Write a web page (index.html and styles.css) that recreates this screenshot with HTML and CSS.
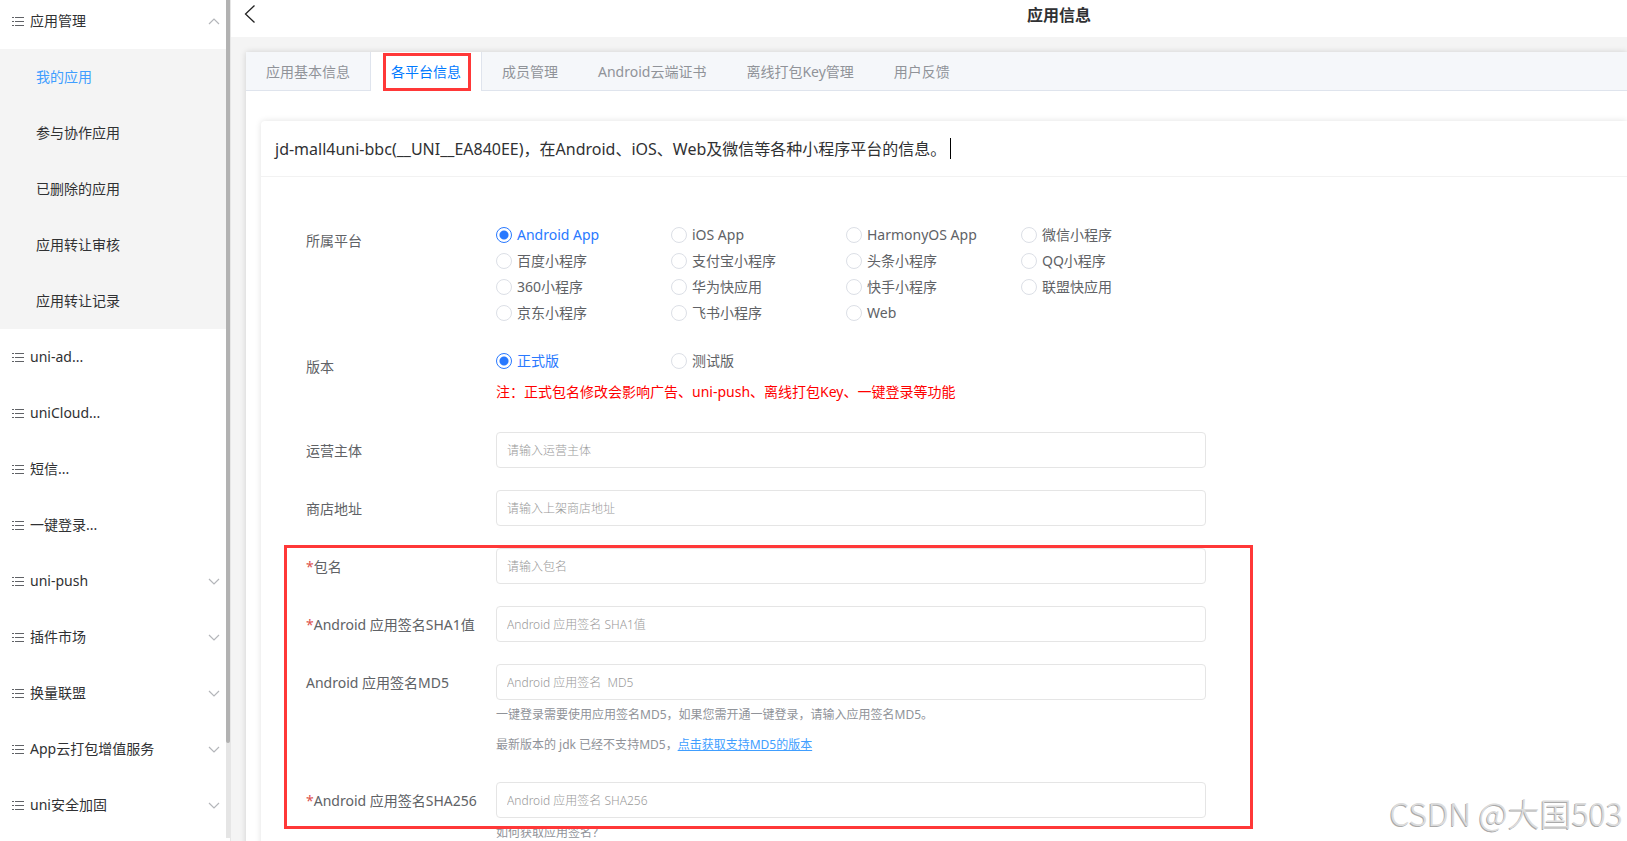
FILE: index.html
```html
<!DOCTYPE html>
<html lang="zh-CN">
<head>
    <meta charset="UTF-8">
    <meta name="viewport" content="width=device-width, initial-scale=1.0">
    <title>应用信息</title>
    <link rel="stylesheet" href="styles.css">
</head>
<body>
    <!-- shared icons -->
    <svg class="icon-defs" aria-hidden="true">
        <symbol id="icon-list" viewBox="0 0 14 12">
            <path d="M0 2.5h2M0 6.5h2M0 10.5h2M3 2.5h9M3 6.5h9M3 10.5h9" stroke="currentColor" fill="none"/>
        </symbol>
        <symbol id="icon-down" viewBox="0 0 12 12">
            <path d="M1 4l5 5 5-5" stroke="currentColor" stroke-width="1.2" fill="none"/>
        </symbol>
        <symbol id="icon-up" viewBox="0 0 12 12">
            <path d="M1 9l5-5 5 5" stroke="currentColor" stroke-width="1.2" fill="none"/>
        </symbol>
    </svg>

    <div class="layout">
        <aside class="sidebar">
            <nav class="menu">
                <button type="button" class="menu-item">
                    <svg class="list-icon"><use href="#icon-list"/></svg>
                    <span>应用管理</span>
                    <svg class="arrow"><use href="#icon-up"/></svg>
                </button>
                <div class="submenu">
                    <a href="#" class="active">我的应用</a>
                    <a href="#">参与协作应用</a>
                    <a href="#">已删除的应用</a>
                    <a href="#">应用转让审核</a>
                    <a href="#">应用转让记录</a>
                </div>
                <a href="#" class="menu-item">
                    <svg class="list-icon"><use href="#icon-list"/></svg>
                    <span>uni-ad...</span>
                </a>
                <a href="#" class="menu-item">
                    <svg class="list-icon"><use href="#icon-list"/></svg>
                    <span>uniCloud...</span>
                </a>
                <a href="#" class="menu-item">
                    <svg class="list-icon"><use href="#icon-list"/></svg>
                    <span>短信...</span>
                </a>
                <a href="#" class="menu-item">
                    <svg class="list-icon"><use href="#icon-list"/></svg>
                    <span>一键登录...</span>
                </a>
                <button type="button" class="menu-item">
                    <svg class="list-icon"><use href="#icon-list"/></svg>
                    <span>uni-push</span>
                    <svg class="arrow"><use href="#icon-down"/></svg>
                </button>
                <button type="button" class="menu-item">
                    <svg class="list-icon"><use href="#icon-list"/></svg>
                    <span>插件市场</span>
                    <svg class="arrow"><use href="#icon-down"/></svg>
                </button>
                <button type="button" class="menu-item">
                    <svg class="list-icon"><use href="#icon-list"/></svg>
                    <span>换量联盟</span>
                    <svg class="arrow"><use href="#icon-down"/></svg>
                </button>
                <button type="button" class="menu-item">
                    <svg class="list-icon"><use href="#icon-list"/></svg>
                    <span>App云打包增值服务</span>
                    <svg class="arrow"><use href="#icon-down"/></svg>
                </button>
                <button type="button" class="menu-item">
                    <svg class="list-icon"><use href="#icon-list"/></svg>
                    <span>uni安全加固</span>
                    <svg class="arrow"><use href="#icon-down"/></svg>
                </button>
            </nav>
            <div class="scrollbar"><div class="thumb"></div></div>
        </aside>

        <main class="main">
            <header class="header">
                <button type="button" class="back" aria-label="返回">
                    <svg width="12" height="18" viewBox="0 0 12 18">
                        <path d="M10.5 .5L1.5 9l9 8.5" stroke="#222" stroke-width="1.3" fill="none"/>
                    </svg>
                </button>
                <h1>应用信息</h1>
            </header>

            <section class="panel">
                <div class="tabs">
                    <button type="button" class="tab">应用基本信息</button>
                    <button type="button" class="tab active">各平台信息</button>
                    <button type="button" class="tab">成员管理</button>
                    <button type="button" class="tab">Android云端证书</button>
                    <button type="button" class="tab">离线打包Key管理</button>
                    <button type="button" class="tab">用户反馈</button>
                </div>

                <div class="card">
                    <div class="card-header">
                        <h2>jd-mall4uni-bbc(__UNI__EA840EE)，在Android、iOS、Web及微信等各种小程序平台的信息。</h2>
                        <span class="caret"></span>
                    </div>

                    <form class="form">
                        <div class="row" role="radiogroup" aria-labelledby="platform-label">
                            <span class="label" id="platform-label">所属平台</span>
                            <div class="field radios">
                                <label class="radio"><input type="radio" name="platform" checked><span>Android App</span></label>
                                <label class="radio"><input type="radio" name="platform"><span>iOS App</span></label>
                                <label class="radio"><input type="radio" name="platform"><span>HarmonyOS App</span></label>
                                <label class="radio"><input type="radio" name="platform"><span>微信小程序</span></label>
                                <label class="radio"><input type="radio" name="platform"><span>百度小程序</span></label>
                                <label class="radio"><input type="radio" name="platform"><span>支付宝小程序</span></label>
                                <label class="radio"><input type="radio" name="platform"><span>头条小程序</span></label>
                                <label class="radio"><input type="radio" name="platform"><span>QQ小程序</span></label>
                                <label class="radio"><input type="radio" name="platform"><span>360小程序</span></label>
                                <label class="radio"><input type="radio" name="platform"><span>华为快应用</span></label>
                                <label class="radio"><input type="radio" name="platform"><span>快手小程序</span></label>
                                <label class="radio"><input type="radio" name="platform"><span>联盟快应用</span></label>
                                <label class="radio"><input type="radio" name="platform"><span>京东小程序</span></label>
                                <label class="radio"><input type="radio" name="platform"><span>飞书小程序</span></label>
                                <label class="radio"><input type="radio" name="platform"><span>Web</span></label>
                            </div>
                        </div>

                        <div class="row" role="radiogroup" aria-labelledby="version-label">
                            <span class="label" id="version-label">版本</span>
                            <div class="field">
                                <div class="radios">
                                    <label class="radio"><input type="radio" name="version" checked><span>正式版</span></label>
                                    <label class="radio"><input type="radio" name="version"><span>测试版</span></label>
                                </div>
                                <p class="warning">注：正式包名修改会影响广告、uni-push、离线打包Key、一键登录等功能</p>
                            </div>
                        </div>

                        <div class="row">
                            <label class="label" for="company">运营主体</label>
                            <div class="field">
                                <input type="text" class="text-input" id="company" placeholder="请输入运营主体">
                            </div>
                        </div>

                        <div class="row">
                            <label class="label" for="store">商店地址</label>
                            <div class="field">
                                <input type="text" class="text-input" id="store" placeholder="请输入上架商店地址">
                            </div>
                        </div>

                        <div class="marked-group">
                            <div class="row">
                                <label class="label" for="package"><span class="required">*</span>包名</label>
                                <div class="field">
                                    <input type="text" class="text-input" id="package" placeholder="请输入包名">
                                </div>
                            </div>

                            <div class="row">
                                <label class="label" for="sha1"><span class="required">*</span>Android 应用签名SHA1值</label>
                                <div class="field">
                                    <input type="text" class="text-input" id="sha1" placeholder="Android 应用签名 SHA1值">
                                </div>
                            </div>

                            <div class="row">
                                <label class="label" for="md5">Android 应用签名MD5</label>
                                <div class="field">
                                    <input type="text" class="text-input" id="md5" placeholder="Android 应用签名  MD5">
                                    <p class="tip">一键登录需要使用应用签名MD5，如果您需开通一键登录，请输入应用签名MD5。</p>
                                    <p class="tip">最新版本的 jdk 已经不支持MD5，<a href="#">点击获取支持MD5的版本</a></p>
                                </div>
                            </div>

                            <div class="row">
                                <label class="label" for="sha256"><span class="required">*</span>Android 应用签名SHA256</label>
                                <div class="field">
                                    <input type="text" class="text-input" id="sha256" placeholder="Android 应用签名 SHA256">
                                    <p class="tip">如何获取应用签名？</p>
                                </div>
                            </div>
                        </div>
                    </form>
                </div>
            </section>
        </main>
    </div>

    <div class="watermark">CSDN @大国503</div>
</body>
</html>
```
FILE: styles.css
```css
* {
    box-sizing: border-box;
    margin: 0;
    padding: 0;
}

body {
    font-family: "Noto Sans", "Noto Sans CJK SC", sans-serif;
    font-size: 14px;
    color: #303133;
    background: #f4f4f4;
    overflow: hidden;
}

button,
input {
    font: inherit;
    border: none;
    background: none;
}

button {
    cursor: pointer;
}

a {
    text-decoration: none;
    color: inherit;
}

.icon-defs {
    display: none;
}

.layout {
    display: flex;
    height: 100vh;
}

/* sidebar */
.sidebar {
    display: flex;
    flex: none;
    width: 231px;
    background: #fff;
    border-right: 1px solid #e6e6e6;
    overflow: hidden;
}

.menu {
    flex: 1;
    /* list is scrolled down a little */
    margin-top: -7px;
}

.menu-item {
    display: flex;
    align-items: center;
    width: 100%;
    height: 56px;
    padding: 0 6px 0 12px;
    color: #303133;
    text-align: left;
}

.menu-item span {
    flex: 1;
    padding-bottom: 2px;
}

.list-icon {
    width: 14px;
    height: 12px;
    margin-right: 4px;
    color: #606266;
}

.arrow {
    width: 12px;
    height: 12px;
    color: #b4b6ba;
}

.submenu {
    background: #f4f4f4;
}

.submenu a {
    display: block;
    padding-left: 36px;
    line-height: 56px;
}

.submenu .active {
    color: #409eff;
}

.scrollbar {
    width: 4px;
    margin-bottom: 3px;
    background: #e5e5e5;
}

.thumb {
    height: 743px;
    max-height: 89%;
    background: #b2b2b2;
    border-radius: 0 0 2px 2px;
}

/* main */
.main {
    display: flex;
    flex-direction: column;
    flex: 1;
    min-width: 0;
    overflow: hidden;
}

.header {
    display: flex;
    align-items: flex-start;
    flex: none;
    height: 37px;
    padding-left: 13px;
    background: #fff;
}

.back {
    height: 18px;
    margin-top: 5px;
}

.back svg {
    display: block;
}

.header h1 {
    flex: 1;
    padding-left: 235px;
    font-size: 16px;
    line-height: 30px;
    text-align: center;
}

.panel {
    flex: 1;
    margin: 15px 0 0 15px;
    background: #fff;
    box-shadow: 0 0 6px rgba(0, 0, 0, 0.15);
}

.tabs {
    display: flex;
    height: 39px;
    background: #f5f7fa;
    border-bottom: 1px solid #dfe4ed;
}

.tab {
    height: 39px;
    padding: 0 20px 2px;
    color: #909399;
}

.tab.active {
    position: relative;
    background: #fff;
    color: #007aff;
    border: 1px solid #dfe4ed;
    border-width: 0 1px;
}

/* red frame round the active tab */
.tab.active::after {
    content: "";
    position: absolute;
    inset: 1px 10px 0 12px;
    border: 3px solid #ff3838;
}

.card {
    margin: 30px 0 0 15px;
    height: 100%;
    background: #fff;
    border-radius: 4px 0 0 0;
    box-shadow: 0 0 6px rgba(0, 0, 0, 0.12);
}

.card-header {
    display: flex;
    align-items: center;
    height: 56px;
    padding-left: 14px;
    border-bottom: 1px solid #f2f2f2;
}

.card-header h2 {
    padding-bottom: 2px;
    font-size: 16px;
    font-weight: normal;
    white-space: nowrap;
}

.caret {
    width: 1px;
    height: 21px;
    margin-left: 4px;
    background: #000;
}

.form {
    display: flex;
    flex-direction: column;
    gap: 22px;
    max-width: 945px;
    padding: 45px 0 0 45px;
}

.row {
    display: flex;
    align-items: flex-start;
}

.label {
    flex: none;
    width: 190px;
    /* keeps a row as high as its input */
    margin-bottom: -2px;
    line-height: 38px;
    color: #606266;
    white-space: nowrap;
}

.required {
    color: #dd524d;
}

.field {
    flex: 1;
    min-width: 0;
}

.radios {
    display: grid;
    grid-template-columns: repeat(4, 175px);
}

.radio {
    display: flex;
    align-items: center;
    gap: 5px;
    height: 26px;
    color: #606266;
    cursor: pointer;
}

.radio span {
    padding-bottom: 2px;
}

.radio input {
    appearance: none;
    width: 16px;
    height: 16px;
    border: 1px solid #dcdfe6;
    border-radius: 50%;
    background: #fff;
}

.radio input:checked {
    border-color: #2979ff;
    background: radial-gradient(circle, #2979ff 4px, #fff 5px);
}

.radio input:checked + span {
    color: #2979ff;
}

.warning {
    line-height: 36px;
    color: #f00;
}

.text-input {
    display: block;
    width: 100%;
    height: 36px;
    padding: 0 10px;
    border: 1px solid #e5e5e5;
    border-radius: 4px;
    font-size: 12px;
}

.text-input::placeholder {
    color: #999;
    font-weight: 300;
}

.tip {
    font-size: 12px;
    line-height: 30px;
    color: #909399;
}

.tip a {
    color: #409eff;
    text-decoration: underline;
}

.marked-group {
    position: relative;
    display: flex;
    flex-direction: column;
    gap: 22px;
}

/* red frame round the signature fields */
.marked-group::after {
    content: "";
    position: absolute;
    inset: -3px -47px 19px -22px;
    border: 3px solid #ff3838;
    pointer-events: none;
}

.watermark {
    position: absolute;
    right: 4px;
    bottom: 6px;
    font-family: "Noto Sans CJK SC", sans-serif;
    font-size: 32px;
    font-weight: 300;
    line-height: 46px;
    color: #dcdcdc;
    text-shadow: -1px 1px 0 #aaa;
}
```
